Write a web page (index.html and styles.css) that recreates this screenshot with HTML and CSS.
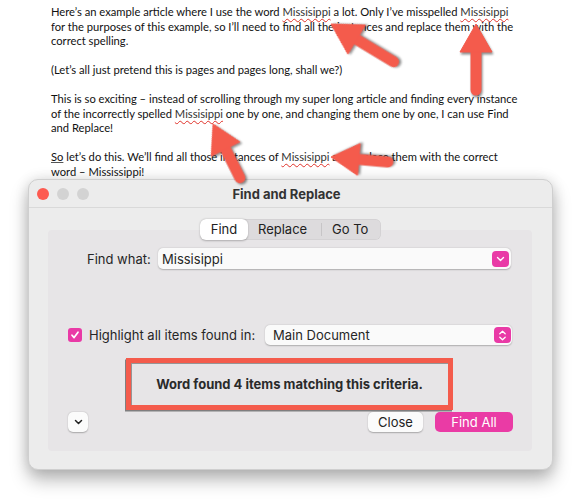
FILE: index.html
```html
<!DOCTYPE html>
<html>
<head>
<meta charset="utf-8">
<link rel="stylesheet" href="styles.css">
</head>
<body>
<div class="doc">
<p>Here’s an example article where I use the word <span class="err">Missisippi</span> a lot. Only I’ve misspelled <span class="err">Missisippi</span><br>for the purposes of this example, so I’ll need to find all the instances and replace them with the<br>correct spelling.</p>
<p>(Let’s all just pretend this is pages and pages long, shall we?)</p>
<p>This is so exciting – instead of scrolling through my super long article and finding every instance<br>of the incorrectly spelled <span class="err">Missisippi</span> one by one, and changing them one by one, I can use Find<br>and Replace!</p>
<p><span class="gram">So</span> let’s do this. We’ll find all those instances of <span class="err">Missisippi</span> and replace them with the correct<br>word – Mississippi!</p>
</div>

<div class="window">
  <div class="titlebar">
    <div class="lights"><span class="light red"></span><span class="light"></span><span class="light"></span></div>
    <div class="title">Find and Replace</div>
  </div>
  <div class="content">
    <div class="panel">
      <div class="tabs">
        <span class="tab active">Find</span><span class="tab">Replace</span><span class="sep"></span><span class="tab">Go To</span>
      </div>
      <div class="row find-row">
        <span class="label">Find what:</span>
        <div class="input">
          <span>Missisippi</span>
          <span class="pbtn"><svg width="9" height="6" viewBox="0 0 9 6"><path d="M1.5 1.5 L4.5 4.5 L7.5 1.5" fill="none" stroke="#fff" stroke-width="1.4" stroke-linecap="round" stroke-linejoin="round"/></svg></span>
        </div>
      </div>
      <div class="row check-row">
        <span class="checkbox"><svg width="10" height="10" viewBox="0 0 10 10"><path d="M2 5.2 L4.1 7.6 L8 2.2" fill="none" stroke="#fff" stroke-width="1.7" stroke-linecap="round" stroke-linejoin="round"/></svg></span>
        <span class="label2">Highlight all items found in:</span>
        <div class="select">
          <span>Main Document</span>
          <span class="pbtn"><svg width="9" height="13" viewBox="0 0 9 13"><path d="M1.8 4.8 L4.5 2.2 L7.2 4.8 M1.8 8.2 L4.5 10.8 L7.2 8.2" fill="none" stroke="#fff" stroke-width="1.3" stroke-linecap="round" stroke-linejoin="round"/></svg></span>
        </div>
      </div>
      <div class="result">Word found 4 items matching this criteria.</div>
      <div class="row bottom-row">
        <span class="btn small"><svg width="9" height="6" viewBox="0 0 9 6"><path d="M1.5 1.5 L4.5 4.5 L7.5 1.5" fill="none" stroke="#222" stroke-width="1.5" stroke-linecap="round" stroke-linejoin="round"/></svg></span>
        <span class="spacer"></span>
        <span class="btn close">Close</span>
        <span class="btn primary">Find All</span>
      </div>
    </div>
  </div>
</div>

<svg class="arrows" width="572" height="500" viewBox="0 0 572 500">
  <g class="arrow" transform="translate(331 24) rotate(-58.9)">
    <line x1="0" y1="20" x2="0" y2="73" stroke-width="11" stroke-linecap="round"/>
    <polygon points="0,0 -17,30 17,30"/>
  </g>
  <g class="arrow" transform="translate(476 24)">
    <line x1="0" y1="20" x2="0" y2="66" stroke-width="11" stroke-linecap="round"/>
    <polygon points="0,0 -16,28 16,28"/>
  </g>
  <g class="arrow" transform="translate(213 124) rotate(-26.6)">
    <line x1="0" y1="20" x2="0" y2="60" stroke-width="11" stroke-linecap="round"/>
    <polygon points="0,0 -16,28 16,28"/>
  </g>
  <g class="arrow" transform="translate(331 157) rotate(-85)">
    <line x1="0" y1="20" x2="0" y2="57" stroke-width="11" stroke-linecap="round"/>
    <polygon points="0,0 -16,28 16,28"/>
  </g>
</svg>
</body>
</html>
```

FILE: styles.css
```css
html, body {
  margin: 0;
  padding: 0;
  background: #ffffff;
}
body {
  position: relative;
  width: 572px;
  height: 500px;
  overflow: hidden;
}
.doc {
  padding: 5px 0 0 51px;
  font-family: Lato, "Open Sans", sans-serif;
  font-size: 11.2px;
  line-height: 14.5px;
  color: #111;
  white-space: nowrap;
  height: 174px;
}
.doc p {
  margin: 0 0 14.5px 0;
}
.doc p:last-child {
  margin-bottom: 0;
}
.err {
  text-decoration: underline wavy #e0322a;
  text-decoration-thickness: 1px;
  text-underline-offset: 2px;
  color: #333;
}
.gram {
  text-decoration: underline;
  text-decoration-color: #555;
}

.window {
  margin-left: 28px;
  width: 525px;
  height: 291px;
  box-sizing: border-box;
  background: #ececec;
  border-radius: 10px;
  border: 1px solid #cfcfcf;
  box-shadow: 0 10px 18px rgba(0, 0, 0, 0.28), 0 0 14px rgba(0, 0, 0, 0.12);
  font-family: Inter, Roboto, sans-serif;
  font-size: 13px;
  color: #262626;
  display: flex;
  flex-direction: column;
}
.titlebar {
  height: 27px;
  border-bottom: 1px solid #d9d9d9;
  display: flex;
  align-items: center;
  flex: none;
}
.lights {
  display: flex;
  gap: 8px;
  padding-left: 8px;
}
.light {
  width: 12px;
  height: 12px;
  border-radius: 50%;
  background: #d3d3d3;
}
.light.red {
  background: #fd5a50;
}
.title {
  flex: 1;
  text-align: center;
  font-weight: 700;
  font-size: 13px;
  color: #333;
  margin-right: 68px;
}
.content {
  padding: 22px 20px 18px 19px;
  flex: 1;
  display: flex;
  flex-direction: column;
}
.panel {
  background: #e7e5e7;
  border-radius: 4px;
  flex: 1;
  display: flex;
  flex-direction: column;
}
.tabs {
  align-self: center;
  margin-top: -11px;
  margin-left: 1px;
  height: 21px;
  display: flex;
  align-items: center;
  background: #dddbdd;
  border-radius: 6px;
  box-shadow: inset 0 0 0 0.5px rgba(0,0,0,0.08);
}
.tab {
  height: 21px;
  line-height: 21px;
  padding: 0 10px;
  color: #222;
}
.tab.active {
  background: #ffffff;
  border-radius: 6px;
  width: 48px;
  padding: 0;
  text-align: center;
  box-shadow: 0 0.5px 2px rgba(0,0,0,0.25);
}
.tab:nth-child(2) {
  width: 53px;
  padding: 0 10px;
}
.tab:last-child {
  width: 39px;
  padding: 0 10px;
}
.sep {
  width: 1px;
  height: 13px;
  background: #c7c5c7;
}
.row {
  display: flex;
  align-items: center;
}
.find-row {
  margin-top: 8px;
  padding-left: 39px;
}
.label {
  width: 62px;
  margin-right: 9px;
  white-space: nowrap;
}
.input, .select {
  height: 21px;
  box-sizing: border-box;
  background: #fafafa;
  border-radius: 5px;
  box-shadow: 0 0.5px 1.5px rgba(0,0,0,0.25);
  display: flex;
  align-items: center;
  justify-content: space-between;
  padding: 0 2px 0 4px;
  flex: none;
}
.input {
  width: 353px;
}
.pbtn {
  width: 17px;
  height: 16px;
  background: #e93aa6;
  border-radius: 4px;
  display: flex;
  align-items: center;
  justify-content: center;
}
.check-row {
  margin-top: 56px;
  padding-left: 20px;
}
.checkbox {
  width: 14px;
  height: 14px;
  border-radius: 3px;
  background: #e93aa6;
  display: flex;
  align-items: center;
  justify-content: center;
  margin-right: 7px;
  flex: none;
}
.label2 {
  width: 169px;
  margin-right: 7px;
  white-space: nowrap;
}
.select {
  width: 247px;
  height: 20px;
  padding: 0 1px 0 8px;
}
.result {
  margin: 13px 0 0 78px;
  width: 327px;
  height: 52px;
  box-sizing: border-box;
  border: 5px solid #f45b4c;
  display: flex;
  align-items: center;
  justify-content: center;
  font-weight: 700;
  font-size: 13px;
  color: #2a2a2a;
  box-shadow: -1px 1.5px 0 rgba(0,0,0,0.45), inset 1px 1px 0 rgba(0,0,0,0.35);
}
.bottom-row {
  margin-top: 2px;
  padding-left: 20px;
  padding-right: 19px;
}
.spacer {
  flex: 1;
}
.btn {
  height: 20px;
  box-sizing: border-box;
  border-radius: 5px;
  display: flex;
  align-items: center;
  justify-content: center;
  background: #fbfbfb;
  box-shadow: 0 0.5px 1.5px rgba(0,0,0,0.28);
  color: #222;
}
.btn.small {
  width: 20px;
}
.btn.close {
  width: 55px;
  margin-right: 12px;
}
.btn.primary {
  width: 78px;
  background: #ea3ba5;
  color: #fff;
  box-shadow: none;
}
.arrows {
  position: absolute;
  left: 0;
  top: 0;
  pointer-events: none;
}
.arrow {
  fill: #f45b4c;
  stroke: #f45b4c;
  filter: drop-shadow(1px 2px 1px rgba(0,0,0,0.45));
}
```
